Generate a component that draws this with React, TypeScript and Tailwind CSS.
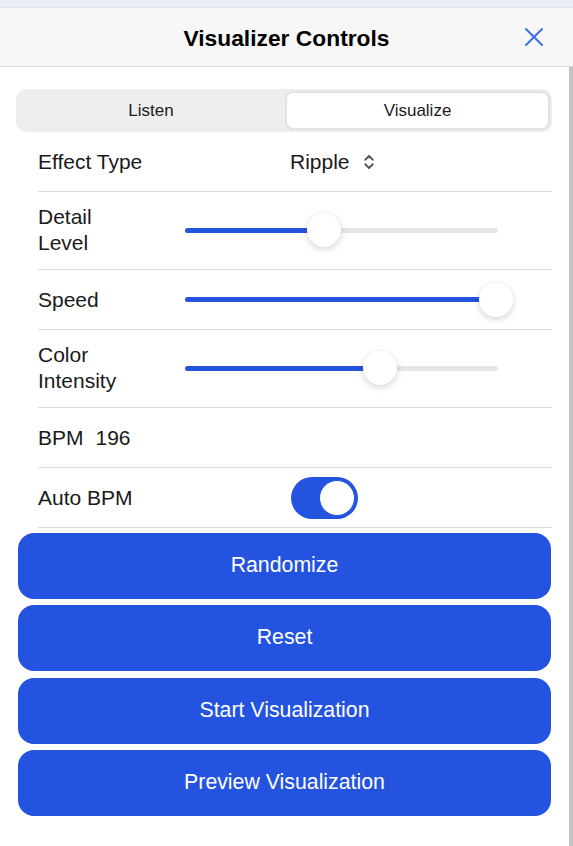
import React, { useState } from "react";
import { X, ChevronsUpDown } from "lucide-react";

interface SliderRowProps {
  label: React.ReactNode;
  value: number;
  twoLine?: boolean;
}

const SliderRow: React.FC<SliderRowProps> = ({ label, value, twoLine }) => {
  return (
    <div
      className={`flex items-center border-b border-[#dedede] ${
        twoLine ? "pt-[12px] pb-[13px]" : "min-h-[60px]"
      }`}
    >
      <div className="w-[147px] leading-[26px]">{label}</div>
      <div className="relative h-[5px] w-[313px] rounded-full bg-[#e6e6e6]">
        <div
          className="absolute left-0 top-0 h-full rounded-full bg-[#2453e0]"
          style={{ width: `${value}%` }}
        />
        <div
          className="absolute top-1/2 h-[34px] w-[34px] -translate-y-1/2 rounded-full bg-white shadow-[0_2px_7px_rgba(0,0,0,0.18)]"
          style={{ left: `calc(${value}% - 17px)` }}
        />
      </div>
    </div>
  );
};

export default function App() {
  const [tab, setTab] = useState<"listen" | "visualize">("visualize");
  const [autoBpm, setAutoBpm] = useState(true);

  const buttons = ["Randomize", "Reset", "Start Visualization", "Preview Visualization"];

  return (
    <div className="flex h-screen w-full flex-col overflow-hidden bg-white font-['Liberation_Sans',Arial,sans-serif] text-[#1a1a1a]">
      <div className="h-[8px] border-b border-[#dde1ea] bg-[#e9ecf4]" />

      <header className="grid h-[59px] grid-cols-[1fr_auto_1fr] items-center border-b border-[#dcdcdc] bg-[#f7f7f7]">
        <div />
        <h1 className="pt-[2px] text-[22.8px] font-bold text-black">Visualizer Controls</h1>
        <div className="flex justify-end pr-[23px]">
          <button className="text-[#3d6ee8]">
            <X size={32} strokeWidth={1.5} />
          </button>
        </div>
      </header>

      <div className="flex min-h-0 flex-1">
        <div className="flex-1 pl-[16px] pr-[17px] pt-[22px]">
          {/* tabs */}
          <div className="grid h-[43px] grid-cols-2 rounded-[10px] bg-[#eeeeee] p-[2px] text-[17px]">
            <button
              onClick={() => setTab("listen")}
              className={`rounded-[8px] ${
                tab === "listen" ? "border border-[#dcdcdc] bg-white" : ""
              }`}
            >
              Listen
            </button>
            <button
              onClick={() => setTab("visualize")}
              className={`ml-[1px] rounded-[8px] ${
                tab === "visualize" ? "border-2 border-[#e2e2e2] bg-white" : ""
              }`}
            >
              Visualize
            </button>
          </div>

          <div className="ml-[22px] text-[21px]">
            <div className="flex min-h-[60px] items-center border-b border-[#dedede]">
              <div className="w-[147px]">Effect Type</div>
              <div className="flex items-center gap-[10px] pl-[105px]">
                <span>Ripple</span>
                <ChevronsUpDown size={18} strokeWidth={2.4} className="text-[#555]" />
              </div>
            </div>

            <SliderRow
              twoLine
              value={44.4}
              label={
                <>
                  Detail
                  <br />
                  Level
                </>
              }
            />
            <SliderRow value={99.4} label="Speed" />
            <SliderRow
              twoLine
              value={62.3}
              label={
                <>
                  Color
                  <br />
                  Intensity
                </>
              }
            />

            <div className="flex min-h-[60px] items-center gap-[12px] border-b border-[#dedede]">
              <span>BPM</span>
              <span>196</span>
            </div>

            <div className="flex min-h-[60px] items-center border-b border-[#dedede]">
              <div className="w-[147px]">Auto BPM</div>
              <div className="pl-[106px]">
                <button
                  onClick={() => setAutoBpm(!autoBpm)}
                  className={`flex h-[42px] w-[67px] items-center rounded-full p-[3px] ${
                    autoBpm ? "justify-end bg-[#2453e0]" : "justify-start bg-[#e3e3e3]"
                  }`}
                >
                  <span className="h-[36px] w-[36px] rounded-full border border-[#2453e0] bg-white" />
                </button>
              </div>
            </div>
          </div>

          <div className="ml-[2px] mr-[1px] mt-[5px] flex flex-col gap-[6.33px]">
            {buttons.map((b) => (
              <button
                key={b}
                className="h-[66px] rounded-[16px] bg-[#2453e0] text-[21.3px] text-white"
              >
                {b}
              </button>
            ))}
          </div>
        </div>
        <div className="w-[4px] bg-[#c4c4c4]" />
      </div>
    </div>
  );
}
